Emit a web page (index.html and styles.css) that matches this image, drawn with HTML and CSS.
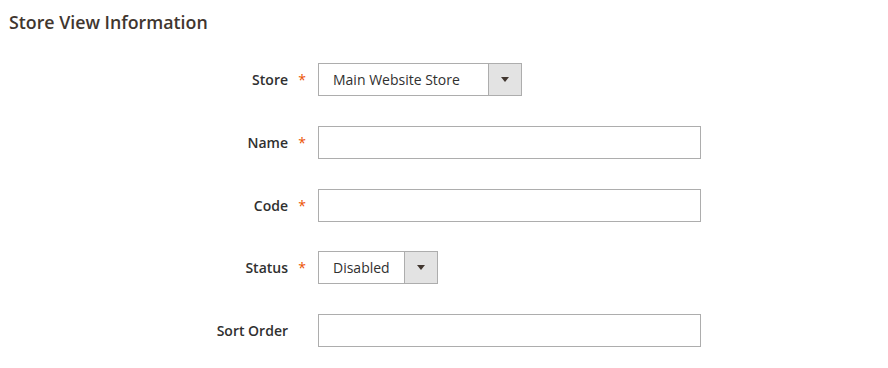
FILE: index.html
```html
<!DOCTYPE html>
<html>
<head>
<meta charset="utf-8">
<link rel="stylesheet" href="styles.css">
</head>
<body>
<div class="page">
  <h2 class="legend">Store View Information</h2>
  <div class="form">
    <div class="label req">Store</div>
    <div class="select wide"><span class="val">Main Website Store</span><span class="btn"><i class="arrow"></i></span></div>

    <div class="label req">Name</div>
    <div class="input"></div>

    <div class="label req">Code</div>
    <div class="input"></div>

    <div class="label req">Status</div>
    <div class="select narrow"><span class="val">Disabled</span><span class="btn"><i class="arrow"></i></span></div>

    <div class="label">Sort Order</div>
    <div class="input"></div>
  </div>
</div>
</body>
</html>
```
FILE: styles.css
```css
html, body { margin: 0; padding: 0; background: #fff; }
body { font-family: "Open Sans", "Liberation Sans", sans-serif; color: #303030; }
.page { padding: 10px 0 0 9px; }
.legend {
  margin: 0;
  font-size: 17.8px;
  font-weight: 600;
  color: #41362f;
  line-height: 24px;
}
.form {
  margin-top: 29px;
  display: grid;
  grid-template-columns: 309px 383px;
  row-gap: 29.75px;
  align-items: center;
}
.label {
  font-size: 14px;
  font-weight: 600;
  text-align: right;
  padding-right: 30px;
  position: relative;
  color: #303030;
}
.label.req::after {
  content: "*";
  position: absolute;
  right: 12px;
  top: 0;
  color: #eb5202;
  font-size: 14px;
  font-weight: 400;
}
.input, .select {
  height: 33px;
  box-sizing: border-box;
  border: 1px solid #adadad;
  background: #fff;
}
.select {
  display: flex;
  align-items: stretch;
  font-size: 14px;
  color: #303030;
}
.select.wide { width: 204px; }
.select.narrow { width: 120px; }
.val { flex: 1; padding-left: 14px; display: flex; align-items: center; }
.btn {
  width: 32px;
  background: #e3e3e3;
  border-left: 1px solid #adadad;
  display: flex;
  align-items: center;
  justify-content: center;
}
.arrow {
  width: 0; height: 0;
  border-left: 4px solid transparent;
  border-right: 4px solid transparent;
  border-top: 5px solid #41362f;
}
```
